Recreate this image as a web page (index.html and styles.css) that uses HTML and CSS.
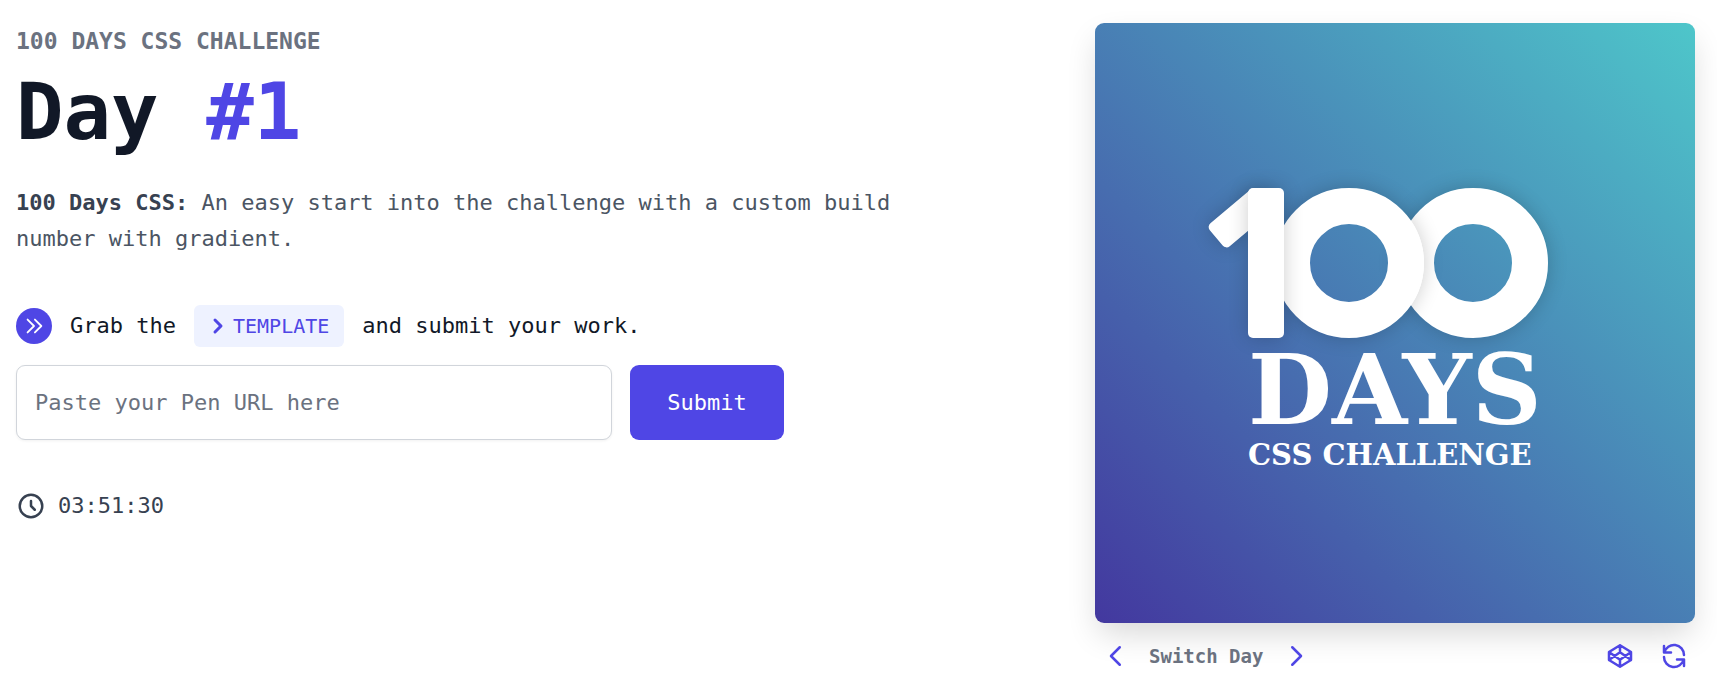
FILE: index.html
```html
<!DOCTYPE html>
<html lang="en">
<head>
<meta charset="utf-8">
<meta name="viewport" content="width=device-width, initial-scale=1">
<title>100 Days CSS Challenge – Day #1</title>
<link rel="stylesheet" href="styles.css">
</head>
<body>
<main class="page">
  <section class="intro">
    <h1 class="heading">
      <span class="eyebrow">100 DAYS CSS CHALLENGE</span>
      <span class="title">Day <span class="accent">#1</span></span>
    </h1>
    <p class="summary"><strong>100 Days CSS:</strong> An easy start into the challenge with a custom build number with gradient.</p>
    <form class="entry">
      <div class="steps">
        <span class="badge"><svg class="icon-small" viewBox="0 0 24 24" aria-hidden="true"><path d="M13 5l7 7-7 7M5 5l7 7-7 7"/></svg></span>
        <label for="pen-url">Grab the</label>
        <a class="template" href="#template"><svg class="icon-solid" viewBox="0 0 20 20" aria-hidden="true"><path d="M7.293 14.707a1 1 0 010-1.414L10.586 10 7.293 6.707a1 1 0 011.414-1.414l4 4a1 1 0 010 1.414l-4 4a1 1 0 01-1.414 0z"/></svg>TEMPLATE</a>
        <span>and submit your work.</span>
      </div>
      <div class="fields">
        <input class="url" id="pen-url" type="url" placeholder="Paste your Pen URL here">
        <button class="submit" type="submit">Submit</button>
      </div>
    </form>
    <div class="timer">
      <svg class="icon" viewBox="0 0 24 24" aria-hidden="true"><path d="M12 8v4l3 3m6-3a9 9 0 11-18 0 9 9 0 0118 0z"/></svg>
      <time>03:51:30</time>
    </div>
  </section>

  <section class="preview">
    <div class="art">
      <div class="lockup">
        <div class="digits" role="img" aria-label="100">
          <span class="flag"></span><span class="stem"></span><span class="zero first"></span><span class="zero"></span>
        </div>
        <p class="days">DAYS</p>
        <p class="challenge">CSS CHALLENGE</p>
      </div>
    </div>
    <nav class="controls" aria-label="Preview controls">
      <a class="control" href="#previous" aria-label="Previous day"><svg class="icon" viewBox="0 0 24 24"><path d="M15 19l-7-7 7-7"/></svg></a>
      <span class="switch">Switch Day</span>
      <a class="control" href="#next" aria-label="Next day"><svg class="icon" viewBox="0 0 24 24"><path d="M9 5l7 7-7 7"/></svg></a>
      <span class="tools">
        <a class="control" href="#codepen" aria-label="Open on CodePen"><svg class="icon icon-bold" viewBox="0 0 30 30"><path d="M15 4.2L26 11v8l-11 6.800L4 19v-8zM15 4.200v7M15 18.800v7M4 11l11 7.800L26 11M4 19l11-7.800L26 19"/></svg></a>
        <button class="control" type="button" aria-label="Reload"><svg class="icon icon-bold" viewBox="0 0 30 30"><path d="M5 5v6.500h7M5.300 11.500A10 10 0 0 1 25 14M25 25v-6.500h-7M24.700 18.500A10 10 0 0 1 5 16"/></svg></button>
      </span>
    </nav>
  </section>
</main>
</body>
</html>
```

FILE: styles.css
```css
* { box-sizing: border-box; }

body {
  margin: 0;
  background: #fff;
  color: #111827;
  font: 22px/36px "DejaVu Sans Mono", monospace;
}

h1, p { margin: 0; }

.page {
  display: flex;
  justify-content: space-between;
  gap: 48px;
  padding: 23px 22px 17px 16px;
}

.intro { flex: 1; min-width: 0; }

.heading { display: flex; flex-direction: column; gap: 8px; }
.eyebrow { color: #6b7280; font-size: 23px; }
.title { font-size: 79px; line-height: 90px; }
.accent { color: #4f46e5; }

.summary { max-width: 912px; margin-top: 28px; color: #4b5563; }
.summary strong { color: #374151; }

.entry {
  display: flex;
  flex-direction: column;
  gap: 18px;
  max-width: 768px;
  margin-top: 48px;
}

.steps { display: flex; align-items: center; gap: 18px; }

.badge {
  display: flex;
  align-items: center;
  justify-content: center;
  width: 36px;
  height: 36px;
  border-radius: 50%;
  background: #4f46e5;
  color: #fff;
}

.template {
  display: flex;
  align-items: center;
  padding: 3px 15px 3px 9px;
  border-radius: 6px;
  background: #eef2ff;
  color: #4f46e5;
  font-size: 20px;
  text-decoration: none;
}

.fields { display: flex; gap: 18px; }

.url, .submit {
  height: 75px;
  border-radius: 9px;
  font: inherit;
}

.url {
  flex: 1;
  min-width: 0;
  padding: 0 18px;
  border: 1px solid #d1d5db;
  background: #fff;
  color: #111827;
  box-shadow: 0 1px 3px rgba(0, 0, 0, .06);
}
.url::placeholder { color: #6b7280; opacity: 1; }

.submit {
  min-width: 154px;
  padding: 0 36px;
  border: 0;
  background: #4f46e5;
  color: #fff;
}

.timer {
  display: flex;
  align-items: center;
  gap: 12px;
  margin-top: 48px;
  color: #374151;
}

.icon, .icon-small, .icon-solid { display: block; flex: none; }
.icon { width: 30px; height: 30px; }
.icon-small { width: 22px; height: 22px; }
.icon-solid { width: 30px; height: 30px; fill: currentColor; }
.icon, .icon-small {
  fill: none;
  stroke: currentColor;
  stroke-width: 2;
  stroke-linecap: round;
  stroke-linejoin: round;
}
.icon-bold { stroke-width: 2.5; }

.preview { flex: 0 0 600px; }

.art {
  display: flex;
  align-items: center;
  justify-content: center;
  aspect-ratio: 1;
  border-radius: 9px;
  background: linear-gradient(45deg, #43389f, #4ec6ca);
  box-shadow: 0 14px 32px -4px rgba(0, 0, 0, .16);
  color: #fff;
}

.lockup { width: 300px; margin: 10px 0 0 6px; }

.digits { display: flex; margin-left: -39px; }
.flag, .stem, .zero {
  position: relative;
  flex: none;
  box-shadow: 0 0 20px rgba(0, 0, 0, .2);
}
.flag {
  width: 62px;
  height: 30px;
  margin: 15px -23px 0 0;
  border-radius: 5px;
  background: #fff;
  transform: rotate(-40deg);
}
.stem {
  z-index: 2;
  width: 36px;
  height: 150px;
  margin-right: -10px;
  border-radius: 5px;
  background: #fff;
}
.zero {
  width: 150px;
  height: 150px;
  border: 36px solid #fff;
  border-radius: 50%;
}
.first { z-index: 1; margin-right: -26px; }

.days, .challenge {
  font-family: "DejaVu Serif", serif;
  font-weight: bold;
  white-space: nowrap;
}
.days { font-size: 97px; line-height: 104px; }
.challenge { font-size: 29px; line-height: 26px; }

.controls {
  display: flex;
  align-items: center;
  gap: 18px;
  padding: 15px 6px 0;
}
.control {
  padding: 0;
  border: 0;
  background: none;
  color: #4f46e5;
}
.switch { color: #6b7280; font-size: 19px; font-weight: bold; }
.tools { display: flex; gap: 24px; margin-left: auto; }
```
